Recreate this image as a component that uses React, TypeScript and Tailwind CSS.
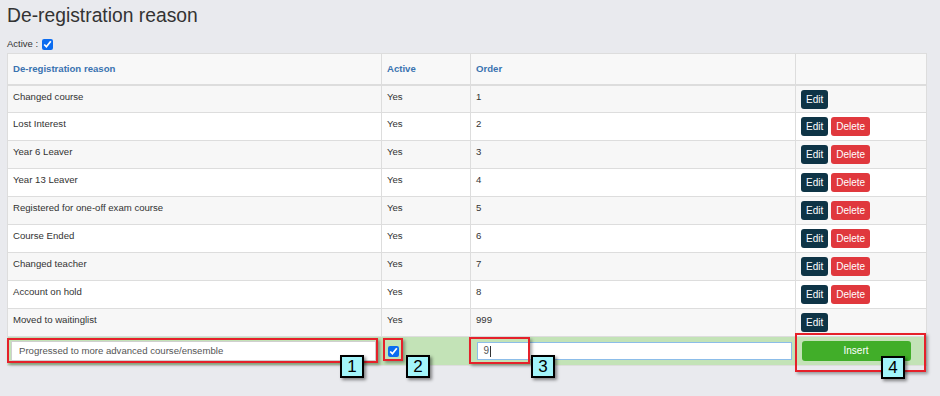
import React from "react";

const rows: { name: string; order: string; del: boolean }[] = [
  { name: "Changed course", order: "1", del: false },
  { name: "Lost Interest", order: "2", del: true },
  { name: "Year 6 Leaver", order: "3", del: true },
  { name: "Year 13 Leaver", order: "4", del: true },
  { name: "Registered for one-off exam course", order: "5", del: true },
  { name: "Course Ended", order: "6", del: true },
  { name: "Changed teacher", order: "7", del: true },
  { name: "Account on hold", order: "8", del: true },
  { name: "Moved to waitinglist", order: "999", del: false },
];

function Label({ n, cls }: { n: string; cls: string }) {
  return (
    <div
      className={
        "absolute w-[24px] h-[23px] bg-[#a3f5fa] border-2 border-black flex items-center justify-center text-[17px] leading-none text-black shadow-[2px_2px_3px_rgba(0,0,0,0.45)] " +
        cls
      }
    >
      {n}
    </div>
  );
}

function RedBox({ cls }: { cls: string }) {
  return (
    <div
      className={
        "absolute border-2 border-[#e5212a] shadow-[2px_2px_3px_rgba(0,0,0,0.35)] pointer-events-none " +
        cls
      }
    />
  );
}

export default function App() {
  return (
    <div
      className="relative w-[940px] h-[396px] bg-[#e9eaee] text-[#333] overflow-hidden"
      style={{ fontFamily: '"Liberation Sans", Arial, sans-serif' }}
    >
      <div className="pl-[7px] pt-[5px]">
        <h1 className="text-[19.3px] leading-[22px] font-normal text-[#333]">De-registration reason</h1>
        <div className="mt-[10px] h-[14px] flex items-center gap-[4px] text-[9.5px]">
          <span>Active :</span>
          <input type="checkbox" defaultChecked className="w-[11px] h-[11px] m-0 accent-[#0b6cf0]" />
        </div>
        <table className="mt-[2px] w-[919px] table-fixed border-collapse border border-[#dddddd] text-[9.6px] leading-[14px]">
          <colgroup>
            <col className="w-[374px]" />
            <col className="w-[89px]" />
            <col className="w-[325px]" />
            <col className="w-[131px]" />
          </colgroup>
          <thead>
            <tr className="h-[31px] bg-[#f8f8f8] border-b-2 border-[#dddddd]">
              <th className="text-left font-bold text-[#3a73b0] px-[5px] align-middle border-r border-[#dddddd]">De-registration reason</th>
              <th className="text-left font-bold text-[#3a73b0] px-[5px] align-middle border-r border-[#dddddd]">Active</th>
              <th className="text-left font-bold text-[#3a73b0] px-[5px] align-middle border-r border-[#dddddd]">Order</th>
              <th className="px-[5px]"></th>
            </tr>
          </thead>
          <tbody>
            {rows.map((r, i) => (
              <tr key={r.name} className={"h-[28px] border-t border-[#dddddd] " + (i % 2 === 0 ? "bg-[#f7f7f7]" : "bg-white")}>
                <td className="px-[5px] pt-[4px] align-top border-r border-[#dddddd]">{r.name}</td>
                <td className="px-[5px] pt-[4px] align-top border-r border-[#dddddd]">Yes</td>
                <td className="px-[5px] pt-[4px] align-top border-r border-[#dddddd]">{r.order}</td>
                <td className="px-[5px] pt-[4px] pb-[3px] align-top">
                  <div className="flex gap-[3px]">
                    <span className="inline-block h-[19px] leading-[19px] px-[5px] rounded-[3px] bg-[#0e3446] text-white text-[10px]">Edit</span>
                    {r.del && (
                      <span className="inline-block h-[19px] leading-[19px] px-[5px] rounded-[3px] bg-[#e0383d] text-white text-[10px]">Delete</span>
                    )}
                  </div>
                </td>
              </tr>
            ))}
            <tr className="h-[29px] bg-[#c3e3b7] border-t border-[#dddddd]">
              <td className="pl-[3px] pr-[6px] align-middle">
                <div className="h-[20px] bg-white border border-[#cfcfcf] flex items-center pl-[7px] text-[9.6px] text-[#555]">
                  Progressed to more advanced course/ensemble
                </div>
              </td>
              <td className="pl-[6px] align-middle">
                <input type="checkbox" defaultChecked className="block w-[11px] h-[11px] m-0 accent-[#0b6cf0]" />
              </td>
              <td className="pl-[6px] pr-[4px] align-middle">
                <div className="h-[18px] bg-white border border-[#8cbde9] flex items-center pl-[6px] text-[10px] text-[#555]">
                  9<span className="inline-block w-px h-[11px] bg-[#333] ml-px" />
                </div>
              </td>
              <td className="pl-[6px] align-middle">
                <div className="w-[109px] h-[20px] rounded-[3px] bg-[#41ae29] text-white text-[10px] flex items-center justify-center">
                  Insert
                </div>
              </td>
            </tr>
          </tbody>
        </table>
      </div>

      <RedBox cls="left-[7px] top-[338px] w-[371px] h-[25px]" />
      <RedBox cls="left-[383px] top-[338px] w-[20px] h-[23px]" />
      <RedBox cls="left-[469px] top-[337px] w-[61px] h-[27px]" />
      <RedBox cls="left-[795px] top-[333px] w-[131px] h-[39px]" />

      <Label n="1" cls="left-[340px] top-[355px]" />
      <Label n="2" cls="left-[406px] top-[355px]" />
      <Label n="3" cls="left-[531px] top-[355px]" />
      <Label n="4" cls="left-[881px] top-[356px]" />
    </div>
  );
}
